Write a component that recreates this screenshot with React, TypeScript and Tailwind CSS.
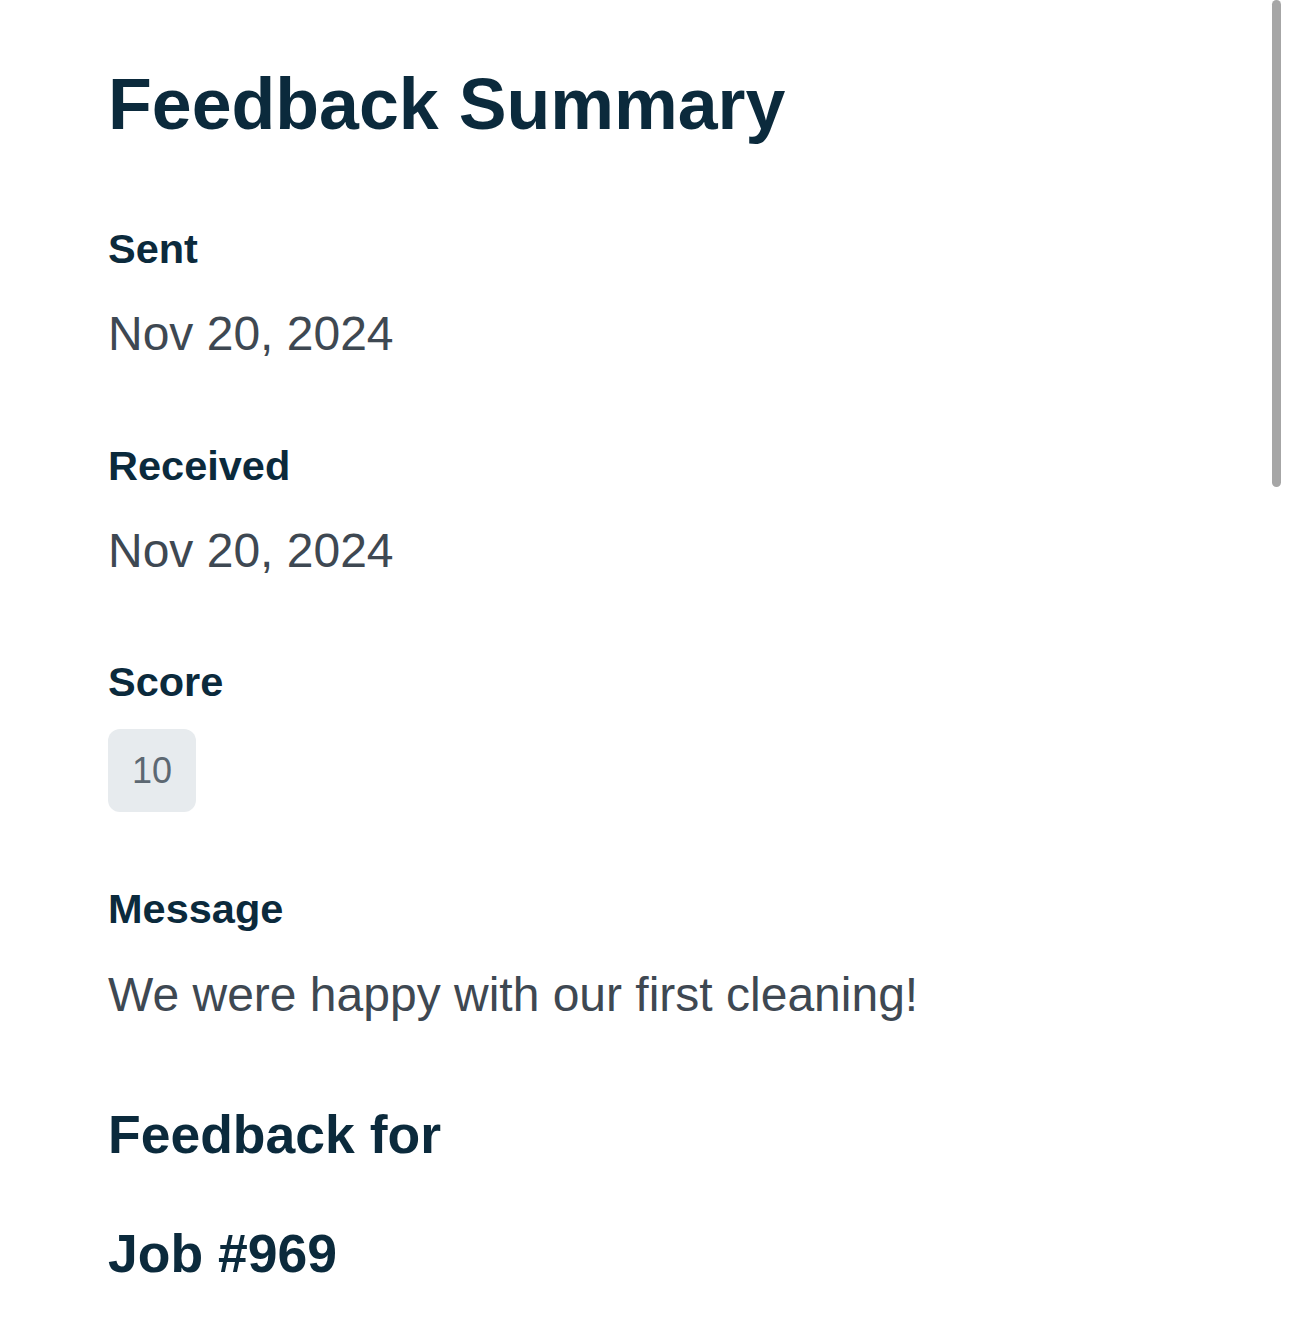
import React from 'react';

// ─── Data ─────────────────────────────────────────────────────────────────────
const FIELDS = [
  { label: 'Sent', value: 'Nov 20, 2024' },
  { label: 'Received', value: 'Nov 20, 2024' },
];

const labelCls = 'text-[41.5px] leading-[42px] font-bold text-[#0b2a3c]';
const valueCls = 'text-[48px] leading-[48px] text-[#3e4852]';

const App: React.FC = () => {
  return (
    <div
      className="relative min-h-[1327px] w-full bg-white"
      style={{ fontFamily: '"Liberation Sans", Arial, sans-serif' }}
    >
      {/* Overlay scrollbar thumb */}
      <div className="absolute right-[9px] top-0 h-[487px] w-[9px] rounded-full bg-[#a6a6a6]" />

      <div className="pl-[108px] pt-[68px]">
        <h1 className="text-[71.7px] leading-[72px] font-bold text-[#0b2a3c]">Feedback Summary</h1>

        {FIELDS.map((f, i) => (
          <div key={i} className={i === 0 ? 'mt-[88px]' : 'mt-[87px]'}>
            <p className={labelCls}>{f.label}</p>
            <p className={`${valueCls} mt-[40px]`}>{f.value}</p>
          </div>
        ))}

        {/* Score */}
        <div className="mt-[86px]">
          <p className={labelCls}>Score</p>
          <div className="mt-[26px] inline-flex h-[83px] w-[88px] items-center justify-center rounded-[12px] bg-[#e7ebee]">
            <span className="text-[36px] leading-none text-[#5d6872]">10</span>
          </div>
        </div>

        {/* Message */}
        <div className="mt-[76px]">
          <p className={labelCls}>Message</p>
          <p className={`${valueCls} mt-[41px]`}>We were happy with our first cleaning!</p>
        </div>

        <h2 className="mt-[89px] text-[53.5px] leading-[54px] font-bold text-[#0b2a3c]">Feedback for</h2>
        <h2 className="mt-[65px] text-[53.5px] leading-[54px] font-bold text-[#0b2a3c]">Job #969</h2>
      </div>
    </div>
  );
};

export default App;
